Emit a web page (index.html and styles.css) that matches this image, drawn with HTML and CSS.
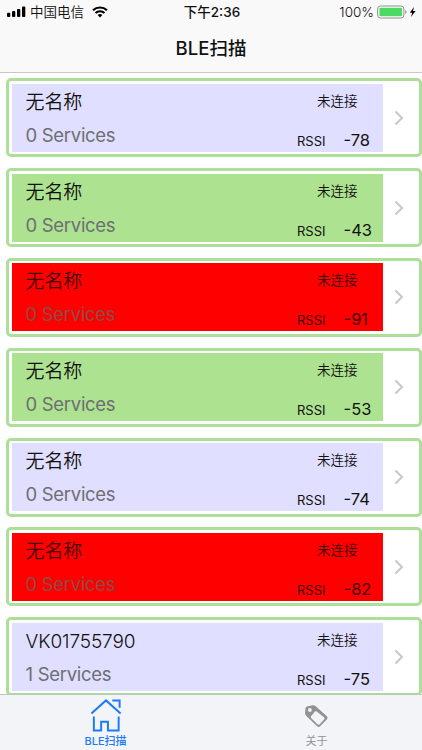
FILE: index.html
```html
<!DOCTYPE html>
<html lang="zh-CN">
<head>
  <meta charset="UTF-8">
  <title>BLE扫描</title>
  <link rel="stylesheet" href="styles.css">
</head>
<body>

  <header>
    <div class="status-bar">
      <div class="carrier">
        <svg width="19" height="12" viewBox="0 0 19 12">
          <rect x="0" y="6.8" width="3.3" height="4.2" rx="1"/>
          <rect x="5" y="5" width="3.3" height="6" rx="1"/>
          <rect x="10" y="3" width="3.3" height="8" rx="1"/>
          <rect x="15" y="0.5" width="3.3" height="10.5" rx="1"/>
        </svg>
        <span>中国电信</span>
        <svg class="wifi" width="16" height="12" viewBox="0 0 16 12">
          <path d="M1 4.2a10.3 10.3 0 0 1 14 0M3.5 7a6.5 6.5 0 0 1 9 0" fill="none" stroke="#000" stroke-width="2.1"/>
          <path d="M5.6 9.1a3.6 3.6 0 0 1 4.8 0L8 11.6z"/>
        </svg>
      </div>
      <div class="time">下午2:36</div>
      <div class="battery">
        <span>100%</span>
        <svg width="40" height="14" viewBox="0 0 40 14">
          <rect x="0.6" y="1" width="26.3" height="12" rx="3" fill="#fff" stroke="#8e8e8e"/>
          <rect x="2.4" y="2.7" width="22.7" height="8.6" rx="1" fill="#4cd964"/>
          <path d="M28.3 5v4q1.3-.6 1.3-2t-1.3-2z" fill="#8e8e8e"/>
          <path d="M37 2l-4.2 5.8h2.5L33.900 12l4.700-6.100h-2.600z"/>
        </svg>
      </div>
    </div>
    <h1>BLE扫描</h1>
  </header>

  <ul id="deviceList"></ul>

  <nav>
    <a class="tab active">
      <svg width="32" height="36" viewBox="0 0 32 36" fill="none" stroke="currentColor" stroke-width="2">
        <path d="M1 17L16 3.500L31 17M22.500 3.500h7.500v7.500M3.500 20v14.500h7.500v-9h7v9H29V20"/>
      </svg>
      <span>BLE扫描</span>
    </a>
    <a class="tab">
      <svg width="26" height="36" viewBox="0 0 26 36">
        <path transform="translate(-.8 1.500)" fill="currentColor" fill-rule="evenodd" d="M3.500 8.300L9 7q1.800-.3 3.200.8L24 18.300q1.500 1.500.1 3L17 28.700q-1.500 1.300-3 0L2.800 18Q1.500 16.600 1.500 14.800L2 10q.2-1.300 1.500-1.700zM6.500 9.800a2 2 0 1 0 0 4a2 2 0 1 0 0-4zM11.700 13.300q.9-.8 1.900 0l7.600 6.300q.9.900.1 1.800l-5 5.300q-.9.800-1.800 0L7.700 20q-.8-.9 0-1.800z"/>
      </svg>
      <span>关于</span>
    </a>
  </nav>

  <script>
    const devices = [
      { name: "无名称", services: 0, rssi: -78 },
      { name: "无名称", services: 0, rssi: -43 },
      { name: "无名称", services: 0, rssi: -91 },
      { name: "无名称", services: 0, rssi: -53 },
      { name: "无名称", services: 0, rssi: -74 },
      { name: "无名称", services: 0, rssi: -82 },
      { name: "VK01755790", services: 1, rssi: -75 }
    ];

    function signalClass(rssi) {
      if (rssi > -60) return "strong";
      if (rssi < -80) return "weak";
      return "normal";
    }

    const deviceList = document.getElementById("deviceList");
    devices.forEach(device => {
      const li = document.createElement("li");
      li.innerHTML = `
        <div class="device ${signalClass(device.rssi)}">
          <div class="info">
            <div class="name">${device.name}</div>
            <div class="services">${device.services} Services</div>
          </div>
          <div class="signal">
            <div class="state">未连接</div>
            <div class="rssi"><span>RSSI</span><b>${device.rssi}</b></div>
          </div>
        </div>
        <svg class="arrow" width="10" height="16" viewBox="0 0 10 16">
          <path d="M1.500 1.500L8 8l-6.500 6.500" fill="none" stroke="#c7c7cc" stroke-width="2"/>
        </svg>
      `;
      deviceList.appendChild(li);
    });
  </script>

</body>
</html>
```
FILE: styles.css
```css
* {
  box-sizing: border-box;
}
body {
  margin: 0;
  height: 750px;
  display: flex;
  flex-direction: column;
  overflow: hidden;
  background: #fff;
  color: #111;
  font-family: Inter, "Noto Sans CJK SC", sans-serif;
}
header {
  height: 73px;
  flex: none;
  background: #f9f9f9;
  border-bottom: 1px solid #c9c7c9;
}
.status-bar {
  height: 24px;
  padding: 0 5px 0 7px;
  display: grid;
  grid-template-columns: 1fr auto 1fr;
  align-items: center;
  font-size: 13.5px;
  line-height: 24px;
}
.carrier, .battery {
  display: flex;
  align-items: center;
}
.carrier span {
  margin-left: 4px;
  font-weight: 350;
}
.wifi {
  margin-left: 8px;
}
.time {
  font-weight: 500;
}
.battery {
  justify-content: flex-end;
}
.battery span {
  margin-right: 3px;
  font-weight: 350;
}
h1 {
  margin: 0;
  font-size: 18.5px;
  font-weight: 500;
  line-height: 48px;
  text-align: center;
}
ul {
  list-style: none;
  margin: 0;
  padding: 5.2px 0 0 6px;
  flex: 1;
  min-height: 0;
  overflow: hidden;
}
li {
  height: 79px;
  margin-bottom: 10.83px;
  padding: 2px;
  border: 3.5px solid #addf98;
  border-radius: 5px;
  display: flex;
  align-items: center;
}
.device {
  width: 371.4px;
  height: 68px;
  margin-left: 1px;
  padding: 1px 12.4px 0 13.5px;
  display: flex;
  justify-content: space-between;
  white-space: nowrap;
}
.normal { background: #e0dfff; }
.strong { background: #ace290; }
.weak {
  background: #ff0000;
  color: #400000;
}
.name {
  font-size: 19px;
  font-weight: 350;
  line-height: 36px;
  letter-spacing: -0.1px;
}
.services {
  font-size: 18.5px;
  font-weight: 400;
  line-height: 28px;
  letter-spacing: -0.3px;
  color: #6e6e72;
}
.weak .services {
  color: #8c4c46;
}
.signal {
  width: 74px;
}
.state {
  padding-left: 20px;
  font-size: 13.5px;
  font-weight: 350;
  line-height: 32px;
}
.rssi {
  display: flex;
  gap: 18px;
  align-items: baseline;
  font-size: 13px;
  line-height: 46px;
}
.rssi b {
  font-size: 16.5px;
  font-weight: 400;
}
.arrow {
  margin-left: 11px;
}
nav {
  height: 56px;
  flex: none;
  display: flex;
  background: #f2f4f7;
  border-top: 1px solid #b9c9b8;
}
.tab {
  flex: 1;
  display: flex;
  flex-direction: column;
  align-items: center;
  padding-top: 2px;
  color: #929292;
  font-size: 11px;
  line-height: 18px;
}
.tab.active {
  color: #1b7af5;
  font-weight: 500;
}
```
